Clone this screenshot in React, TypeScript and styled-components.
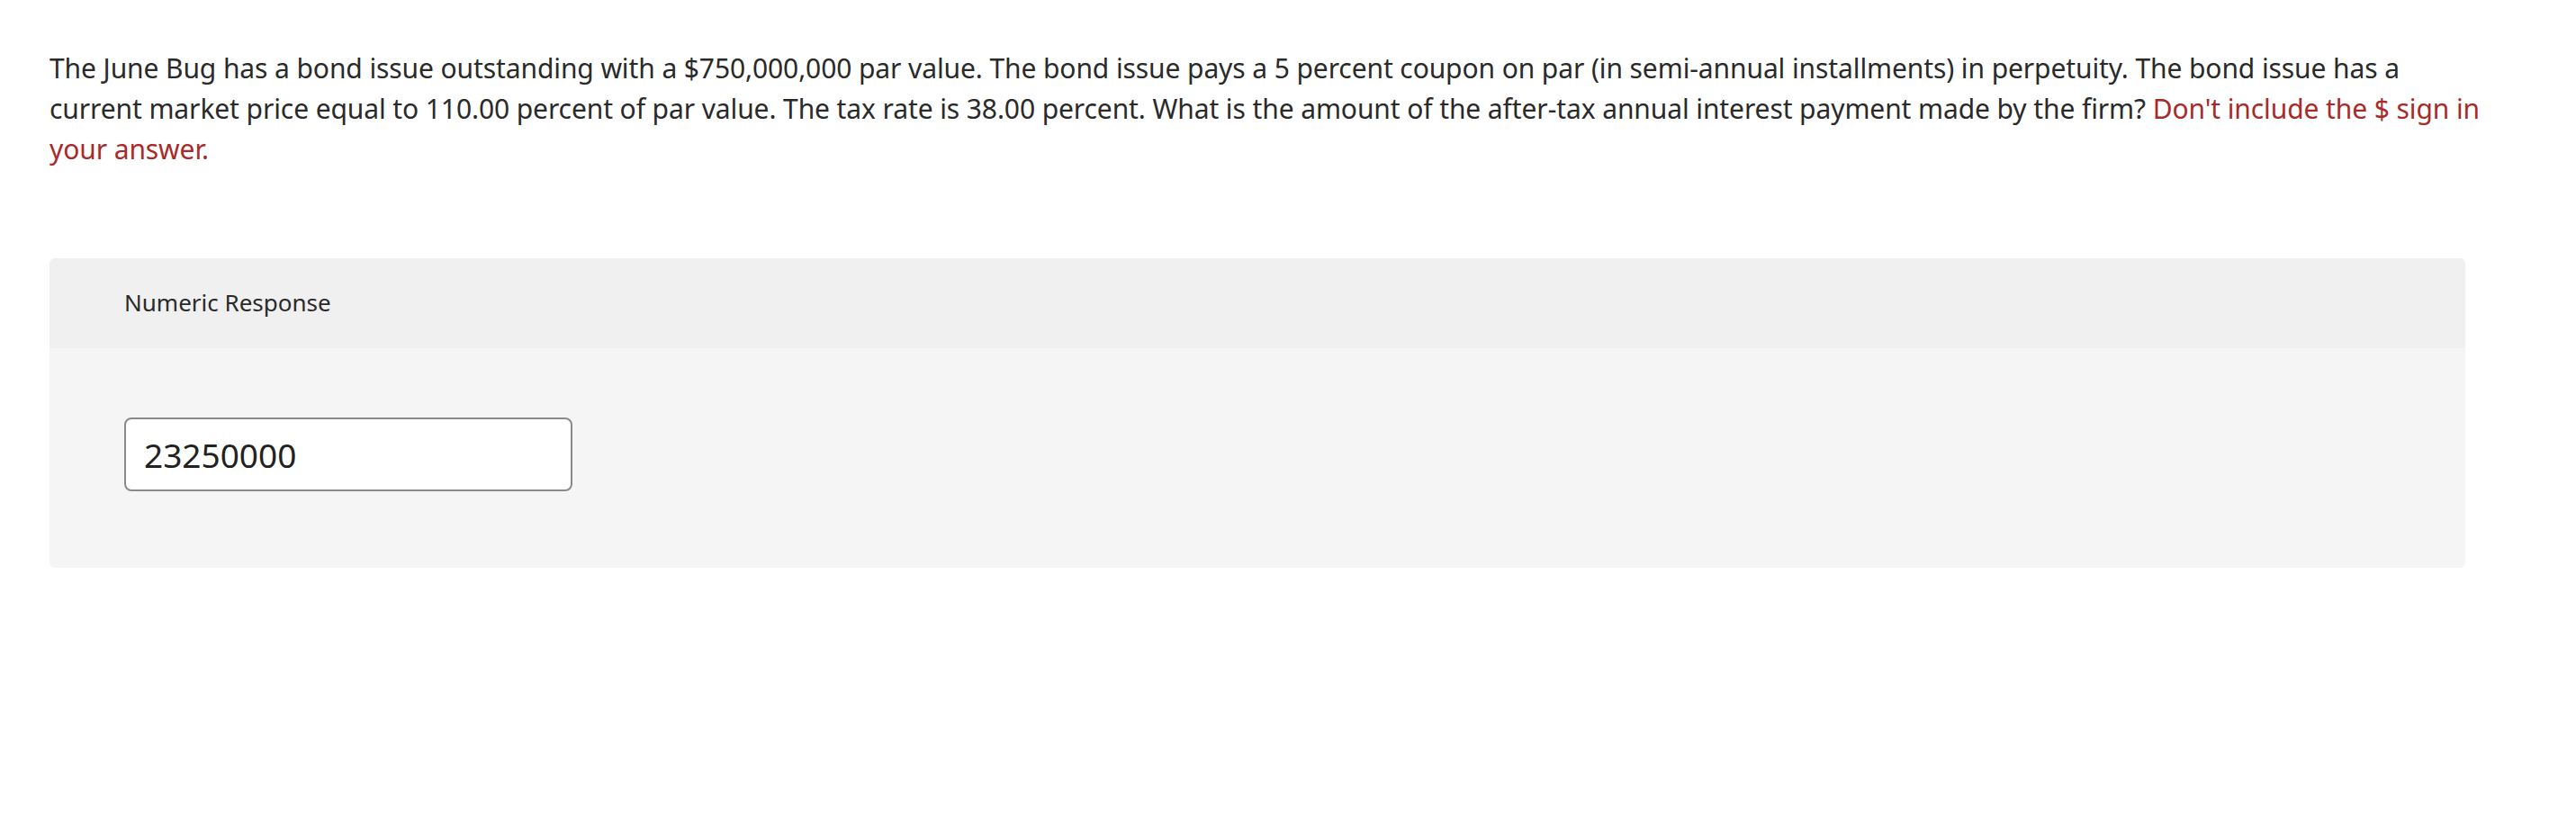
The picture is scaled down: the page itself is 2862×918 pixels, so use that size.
import React from "react";
import styled, { createGlobalStyle } from "styled-components";

const Global = createGlobalStyle`
  html, body { margin: 0; padding: 0; background: #ffffff; }
  body { font-family: "Noto Sans", "Open Sans", sans-serif; color: #2a2a2a; }
  * { box-sizing: border-box; }
`;

const Page = styled.main`
  display: flex;
  flex-direction: column;
  align-items: flex-start;
  padding: 53px 55px 0 55px;
`;

const Prose = styled.p`
  margin: 0;
  max-width: 2708px;
  font-size: 30px;
  line-height: 45px;
  letter-spacing: -0.1px;
  color: #2a2a2a;
`;

const Hint = styled.span`
  color: #a82a2a;
`;

const Panel = styled.section`
  margin-top: 99px;
  width: 2684px;
  border-radius: 6px;
  overflow: hidden;
  background: #f5f5f5;
`;

const PanelHeader = styled.header`
  background: #f0f0f0;
  height: 100px;
  padding: 30px 83px 0 83px;
  font-size: 26px;
  line-height: 39px;
  color: #2a2a2a;
`;

const PanelBody = styled.div`
  display: flex;
  padding: 77px 83px 85px 83px;
`;

const NumberInput = styled.input`
  width: 498px;
  height: 82px;
  padding: 0 20px;
  border: 2px solid #8a8a8a;
  border-radius: 8px;
  background: #ffffff;
  font-family: "Noto Sans", "Open Sans", sans-serif;
  font-size: 37px;
  color: #222222;
  outline: none;
`;

export default function App() {
  return (
    <>
      <Global />
      <Page>
        <Prose>
          The June Bug has a bond issue outstanding with a $750,000,000 par value. The bond issue pays a 5 percent
          coupon on par (in semi-annual installments) in perpetuity. The bond issue has a current market price equal to
          110.00 percent of par value. The tax rate is 38.00 percent. What is the amount of the after-tax annual interest
          payment made by the firm? <Hint>Don't include the $ sign in your answer.</Hint>
        </Prose>
        <Panel>
          <PanelHeader>Numeric Response</PanelHeader>
          <PanelBody>
            <NumberInput type="text" defaultValue="23250000" readOnly aria-label="Numeric Response" />
          </PanelBody>
        </Panel>
      </Page>
    </>
  );
}
